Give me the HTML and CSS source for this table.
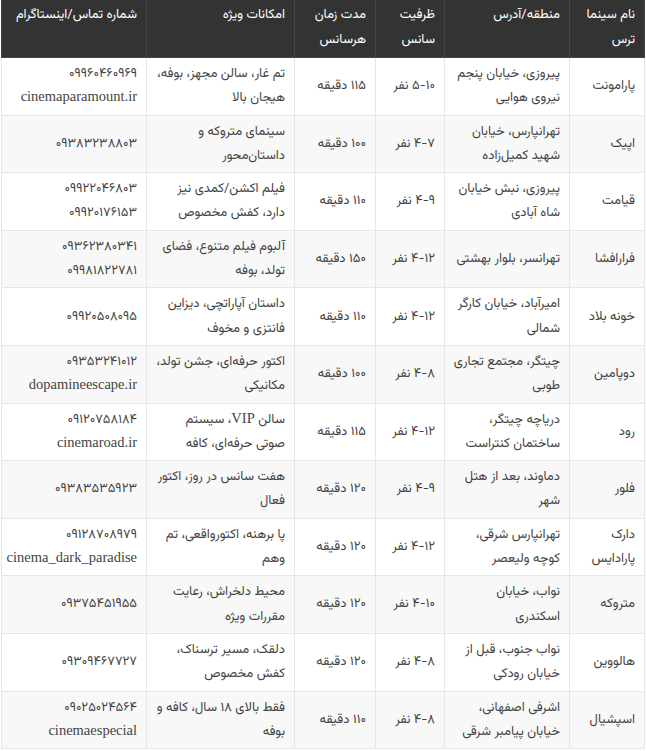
FILE: index.html
```html
<!DOCTYPE html>
<html lang="fa" dir="rtl">
<head>
<meta charset="utf-8">
<title>سینماهای ترس</title>
<link rel="stylesheet" href="styles.css">
</head>
<body>
<table class="cinema-table">
  <colgroup>
    <col class="c-name"><col class="c-addr"><col class="c-cap"><col class="c-dur"><col class="c-feat"><col class="c-contact">
  </colgroup>
  <thead>
    <tr>
      <th>نام سینما ترس</th>
      <th>منطقه/آدرس</th>
      <th>ظرفیت سانس</th>
      <th>مدت زمان هرسانس</th>
      <th>امکانات ویژه</th>
      <th class="nowrap">شماره تماس/اینستاگرام</th>
    </tr>
  </thead>
  <tbody>
    <tr>
      <td>پارامونت</td>
      <td>پیروزی، خیابان پنجم<br>نیروی هوایی</td>
      <td>۵-۱۰ نفر</td>
      <td>۱۱۵ دقیقه</td>
      <td>تم غار، سالن مجهز، بوفه،<br>هیجان بالا</td>
      <td>۰۹۹۶۰۴۶۰۹۶۹<br><span class="lat">cinemaparamount.ir</span></td>
    </tr>
    <tr>
      <td>اپیک</td>
      <td>تهرانپارس، خیابان<br>شهید کمیل‌زاده</td>
      <td>۴-۷ نفر</td>
      <td>۱۰۰ دقیقه</td>
      <td>سینمای متروکه و<br>داستان‌محور</td>
      <td>۰۹۳۸۳۲۳۸۸۰۳</td>
    </tr>
    <tr>
      <td>قیامت</td>
      <td>پیروزی، نبش خیابان<br>شاه آبادی</td>
      <td>۴-۹ نفر</td>
      <td>۱۱۰ دقیقه</td>
      <td>فیلم اکشن/کمدی نیز<br>دارد، کفش مخصوص</td>
      <td>۰۹۹۲۲۰۴۶۸۰۳<br>۰۹۹۲۰۱۷۶۱۵۳</td>
    </tr>
    <tr>
      <td>فرارافشا</td>
      <td>تهرانسر، بلوار بهشتی</td>
      <td>۴-۱۲ نفر</td>
      <td>۱۵۰ دقیقه</td>
      <td>آلبوم فیلم متنوع، فضای<br>تولد، بوفه</td>
      <td>۰۹۳۶۲۳۸۰۳۴۱<br>۰۹۹۸۱۸۲۲۷۸۱</td>
    </tr>
    <tr>
      <td>خونه بلاد</td>
      <td>امیرآباد، خیابان کارگر<br>شمالی</td>
      <td>۴-۱۲ نفر</td>
      <td>۱۱۰ دقیقه</td>
      <td>داستان آپاراتچی، دیزاین<br>فانتزی و مخوف</td>
      <td>۰۹۹۲۰۵۰۸۰۹۵</td>
    </tr>
    <tr>
      <td>دوپامین</td>
      <td>چیتگر، مجتمع تجاری<br>طوبی</td>
      <td>۴-۸ نفر</td>
      <td>۱۰۰ دقیقه</td>
      <td>اکتور حرفه‌ای، جشن تولد،<br>مکانیکی</td>
      <td>۰۹۳۵۳۲۴۱۰۱۲<br><span class="lat">dopamineescape.ir</span></td>
    </tr>
    <tr>
      <td>رود</td>
      <td>دریاچه چیتگر،<br>ساختمان کنتراست</td>
      <td>۴-۱۲ نفر</td>
      <td>۱۱۵ دقیقه</td>
      <td>سالن <span class="lat">VIP</span>، سیستم<br>صوتی حرفه‌ای، کافه</td>
      <td>۰۹۱۲۰۷۵۸۱۸۴<br><span class="lat">cinemaroad.ir</span></td>
    </tr>
    <tr>
      <td>فلور</td>
      <td>دماوند، بعد از هتل<br>شهر</td>
      <td>۴-۹ نفر</td>
      <td>۱۲۰ دقیقه</td>
      <td>هفت سانس در روز، اکتور<br>فعال</td>
      <td>۰۹۳۸۳۵۳۵۹۲۳</td>
    </tr>
    <tr>
      <td>دارک<br>پارادایس</td>
      <td>تهرانپارس شرقی،<br>کوچه ولیعصر</td>
      <td>۴-۱۲ نفر</td>
      <td>۱۲۰ دقیقه</td>
      <td>پا برهنه، اکتورواقعی، تم<br>وهم</td>
      <td>۰۹۱۲۸۷۰۸۹۷۹<br><span class="lat">cinema_dark_paradise</span></td>
    </tr>
    <tr>
      <td>متروکه</td>
      <td>نواب، خیابان<br>اسکندری</td>
      <td>۴-۱۰ نفر</td>
      <td>۱۲۰ دقیقه</td>
      <td>محیط دلخراش، رعایت<br>مقررات ویژه</td>
      <td>۰۹۳۷۵۴۵۱۹۵۵</td>
    </tr>
    <tr>
      <td>هالووین</td>
      <td>نواب جنوب، قبل از<br>خیابان رودکی</td>
      <td>۴-۸ نفر</td>
      <td>۱۲۰ دقیقه</td>
      <td>دلقک، مسیر ترسناک،<br>کفش مخصوص</td>
      <td>۰۹۳۰۹۴۶۷۷۲۷</td>
    </tr>
    <tr>
      <td>اسپشیال</td>
      <td>اشرفی اصفهانی،<br>خیابان پیامبر شرقی</td>
      <td>۴-۸ نفر</td>
      <td>۱۱۰ دقیقه</td>
      <td>فقط بالای ۱۸ سال، کافه و<br>بوفه</td>
      <td>۰۹۰۲۵۰۲۴۵۶۴<br><span class="lat">cinemaespecial</span></td>
    </tr>
  </tbody>
</table>
</body>
</html>
```

FILE: styles.css
```css
html, body {
  margin: 0;
  padding: 0;
  background: #fff;
}
body {
  padding: 0 1px 0 2px;
  font-family: "Vazirmatn", "Noto Sans Arabic", "DejaVu Sans", sans-serif;
  font-size: 13px;
  color: #444;
}
.cinema-table {
  width: 643px;
  border-collapse: collapse;
  table-layout: fixed;
}
.c-name { width: 75px; }
.c-addr { width: 125px; }
.c-cap { width: 69px; }
.c-dur { width: 81px; }
.c-feat { width: 148px; }
.c-contact { width: 145px; }

.cinema-table th {
  background: #333;
  color: #fff;
  font-weight: normal;
  text-align: right;
  vertical-align: top;
  line-height: 25px;
  padding: 3px 9px;
  height: 51px;
  border: 1px solid #454545;
  border-top: 0;
}
.cinema-table th.nowrap {
  white-space: nowrap;
  padding-left: 4px;
}
.cinema-table td {
  text-align: right;
  vertical-align: middle;
  line-height: 24.3px;
  padding: 4px 9px;
  border: 1px solid #e6e6e6;
  white-space: nowrap;
}
.cinema-table tbody tr:nth-child(even) td {
  background: #f8f8f8;
}
.lat {
  font-family: "Liberation Serif", serif;
  font-size: 14.5px;
  line-height: 1;
}
```
